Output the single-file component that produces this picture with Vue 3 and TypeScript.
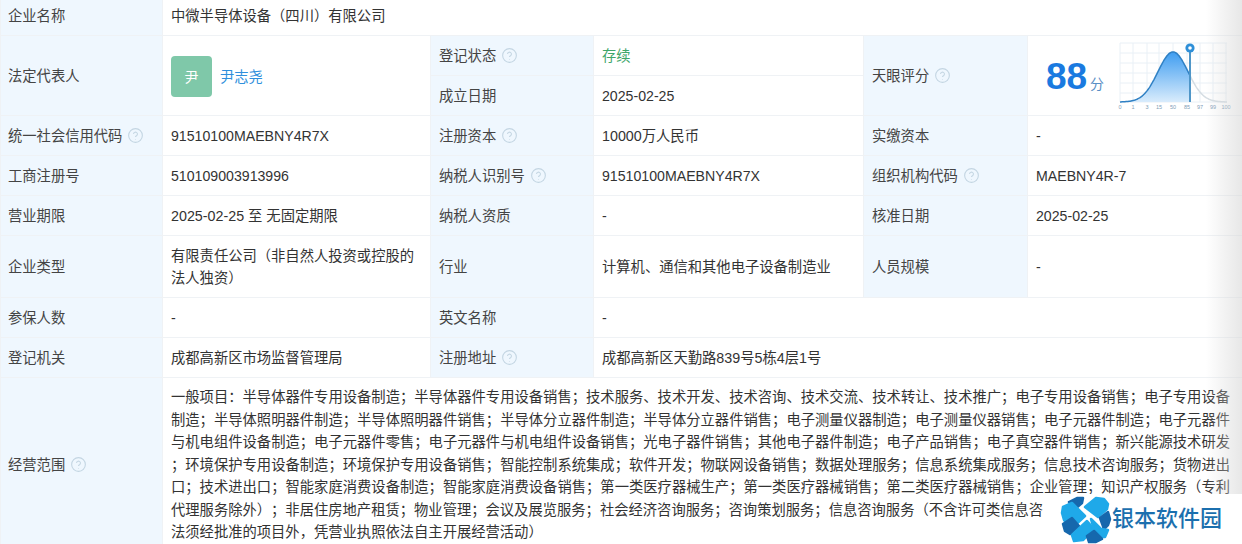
<script setup lang="ts">
const scopeLines: string[] = [
  '一般项目：半导体器件专用设备制造；半导体器件专用设备销售；技术服务、技术开发、技术咨询、技术交流、技术转让、技术推广；电子专用设备销售；电子专用设备',
  '制造；半导体照明器件制造；半导体照明器件销售；半导体分立器件制造；半导体分立器件销售；电子测量仪器制造；电子测量仪器销售；电子元器件制造；电子元器件',
  '与机电组件设备制造；电子元器件零售；电子元器件与机电组件设备销售；光电子器件销售；其他电子器件制造；电子产品销售；电子真空器件销售；新兴能源技术研发',
  '；环境保护专用设备制造；环境保护专用设备销售；智能控制系统集成；软件开发；物联网设备销售；数据处理服务；信息系统集成服务；信息技术咨询服务；货物进出',
  '口；技术进出口；智能家庭消费设备制造；智能家庭消费设备销售；第一类医疗器械生产；第一类医疗器械销售；第二类医疗器械销售；企业管理；知识产权服务（专利',
]
const ticks = [
  { x: 4, t: '0' }, { x: 17, t: '1' }, { x: 31, t: '3' }, { x: 43, t: '15' }, { x: 57, t: '50' },
  { x: 71, t: '85' }, { x: 84, t: '97' }, { x: 97, t: '99' }, { x: 110, t: '100' },
]
const hLines = [4, 14, 24, 34, 44, 54, 63]
const curveY = (x: number): number => 63 - 50 * Math.exp(-((x - 57) ** 2) / (2 * 15 * 15))
const pts = (a: number, b: number): string => {
  const out: string[] = []
  for (let x = a; x <= b; x += 1) out.push(`${x},${curveY(x).toFixed(1)}`)
  return out.join(' L')
}
const leftCurve = 'M' + pts(4, 74)
const rightCurve = 'M' + pts(74, 111)
const area = leftCurve + ' L74,63 L4,63 Z'
</script>

<template>
  <div class="page">
    <table class="info">
      <colgroup>
        <col class="c1" /><col class="c2" /><col class="c3" /><col class="c4" /><col class="c5" /><col class="c6" />
      </colgroup>
      <tbody>
        <tr class="r40">
          <th class="first">企业名称</th>
          <td colspan="5">中微半导体设备（四川）有限公司</td>
        </tr>
        <tr class="r40">
          <th class="first" rowspan="2">法定代表人</th>
          <td rowspan="2">
            <div class="person">
              <div class="avatar">尹</div>
              <span class="link">尹志尧</span>
            </div>
          </td>
          <th>登记状态<svg class="help" viewBox="0 0 14 14"><circle cx="7" cy="7" r="6.4" /><path d="M5.2 5.6a1.8 1.8 0 1 1 2.7 1.6c-.6.3-.9.7-.9 1.3M7 10.2v.5" /></svg></th>
          <td class="ok">存续</td>
          <th rowspan="2">天眼评分<svg class="help" viewBox="0 0 14 14"><circle cx="7" cy="7" r="6.4" /><path d="M5.2 5.6a1.8 1.8 0 1 1 2.7 1.6c-.6.3-.9.7-.9 1.3M7 10.2v.5" /></svg></th>
          <td rowspan="2" class="score-cell">
            <div class="score">
              <div class="num">88</div>
              <div class="unit">分</div>
              <svg class="chart" width="116" height="76" viewBox="0 0 116 76">
                <defs>
                  <linearGradient id="fillG" x1="0" y1="0" x2="0" y2="1">
                    <stop offset="0" stop-color="#3f9df0" />
                    <stop offset="1" stop-color="#d9ecfc" />
                  </linearGradient>
                </defs>
                <line v-for="y in hLines" :key="'h' + y" x1="4" x2="111" :y1="y" :y2="y" class="grid" />
                <line v-for="t in ticks" :key="'v' + t.x" :x1="t.x" :x2="t.x" y1="4" y2="63" class="grid" />
                <path :d="area" fill="url(#fillG)" />
                <path :d="rightCurve" class="curve-grey" />
                <path :d="leftCurve" class="curve" />
                <line x1="74" x2="74" y1="12" y2="63" class="marker" />
                <circle cx="74" cy="9" r="4.6" class="pin" />
                <circle cx="74" cy="9" r="1.8" fill="#ffffff" />
                <text v-for="t in ticks" :key="'t' + t.x" :x="t.x" y="70" class="tick">{{ t.t }}</text>
              </svg>
            </div>
          </td>
        </tr>
        <tr class="r40">
          <th>成立日期</th>
          <td class="latin">2025-02-25</td>
        </tr>
        <tr class="r40">
          <th class="first">统一社会信用代码<svg class="help" viewBox="0 0 14 14"><circle cx="7" cy="7" r="6.4" /><path d="M5.2 5.6a1.8 1.8 0 1 1 2.7 1.6c-.6.3-.9.7-.9 1.3M7 10.2v.5" /></svg></th>
          <td class="latin">91510100MAEBNY4R7X</td>
          <th>注册资本<svg class="help" viewBox="0 0 14 14"><circle cx="7" cy="7" r="6.4" /><path d="M5.2 5.6a1.8 1.8 0 1 1 2.7 1.6c-.6.3-.9.7-.9 1.3M7 10.2v.5" /></svg></th>
          <td>10000万人民币</td>
          <th>实缴资本</th>
          <td>-</td>
        </tr>
        <tr class="r40">
          <th class="first">工商注册号</th>
          <td class="latin">510109003913996</td>
          <th>纳税人识别号<svg class="help" viewBox="0 0 14 14"><circle cx="7" cy="7" r="6.4" /><path d="M5.2 5.6a1.8 1.8 0 1 1 2.7 1.6c-.6.3-.9.7-.9 1.3M7 10.2v.5" /></svg></th>
          <td class="latin">91510100MAEBNY4R7X</td>
          <th>组织机构代码<svg class="help" viewBox="0 0 14 14"><circle cx="7" cy="7" r="6.4" /><path d="M5.2 5.6a1.8 1.8 0 1 1 2.7 1.6c-.6.3-.9.7-.9 1.3M7 10.2v.5" /></svg></th>
          <td class="latin">MAEBNY4R-7</td>
        </tr>
        <tr class="r40">
          <th class="first">营业期限</th>
          <td>2025-02-25 至 无固定期限</td>
          <th>纳税人资质</th>
          <td>-</td>
          <th>核准日期</th>
          <td class="latin">2025-02-25</td>
        </tr>
        <tr class="r62">
          <th class="first">企业类型</th>
          <td>有限责任公司（非自然人投资或控股的法人独资）</td>
          <th>行业</th>
          <td>计算机、通信和其他电子设备制造业</td>
          <th>人员规模</th>
          <td>-</td>
        </tr>
        <tr class="r40">
          <th class="first">参保人数</th>
          <td>-</td>
          <th>英文名称</th>
          <td colspan="3">-</td>
        </tr>
        <tr class="r40">
          <th class="first">登记机关</th>
          <td>成都高新区市场监督管理局</td>
          <th>注册地址<svg class="help" viewBox="0 0 14 14"><circle cx="7" cy="7" r="6.4" /><path d="M5.2 5.6a1.8 1.8 0 1 1 2.7 1.6c-.6.3-.9.7-.9 1.3M7 10.2v.5" /></svg></th>
          <td colspan="3">成都高新区天勤路839号5栋4层1号</td>
        </tr>
        <tr class="r174">
          <th class="first">经营范围<svg class="help" viewBox="0 0 14 14"><circle cx="7" cy="7" r="6.4" /><path d="M5.2 5.6a1.8 1.8 0 1 1 2.7 1.6c-.6.3-.9.7-.9 1.3M7 10.2v.5" /></svg></th>
          <td colspan="5" class="scope">
            <div v-for="(l, i) in scopeLines" :key="i" class="just">{{ l }}</div>
            <div class="line">代理服务除外）；非居住房地产租赁；物业管理；会议及展览服务；社会经济咨询服务；咨询策划服务；信息咨询服务（不含许可类信息咨</div>
            <div class="line">法须经批准的项目外，凭营业执照依法自主开展经营活动）</div>
          </td>
        </tr>
      </tbody>
    </table>

    <div class="shade"></div>

    <div class="mark">
      <svg class="mark-logo" width="56" height="52" viewBox="0 0 56 52">
        <g stroke-linejoin="round" stroke-width="2.5">
          <path d="M11 9 L19 5 L25 5 L24 10 L17 16 Z" fill="#1668ad" stroke="#1668ad" />
          <path d="M27 14 L38 5 L46 6 L50 11 L49 16 L40 24 Z" fill="#1fa9e9" stroke="#1fa9e9" />
          <path d="M42 25 L50 19 L52 26 L50 32 L46 36 Z" fill="#1668ad" stroke="#1668ad" />
          <path d="M5 14 L14 10 L27 23 L14 35 L6 27 L4 20 Z" fill="#1fa9e9" stroke="#1fa9e9" />
          <path d="M5 31 L14 25 L21 33 L12 41 L7 38 Z" fill="#1668ad" stroke="#1668ad" />
          <path d="M14 42 L29 28 L36 36 L25 47 L16 48 Z" fill="#1fa9e9" stroke="#1fa9e9" />
          <path d="M33 26 L43 36 L50 37 L47 44 L42 44 L36 37 Z" fill="#1fa9e9" stroke="#1fa9e9" />
          <path d="M29 43 L36 38 L44 46 L38 49 L31 49 Z" fill="#1668ad" stroke="#1668ad" />
        </g>
      </svg>
      <span class="mark-text">银本软件园</span>
    </div>
  </div>
</template>

<style scoped>
.page {
  position: relative;
  width: 1242px;
  height: 544px;
  overflow: hidden;
  background: #fff;
  font-family: "Liberation Sans", "Noto Sans CJK SC", sans-serif;
  font-size: 14.3px;
  color: #333;
  text-spacing-trim: space-all;
}
.info {
  width: 1242px;
  margin-top: -5px;
  table-layout: fixed;
  border-collapse: collapse;
}
.c1 { width: 162px; }
.c2 { width: 268px; }
.c3 { width: 163px; }
.c4 { width: 270px; }
.c5 { width: 164px; }
.c6 { width: 215px; }
.r40 { height: 40px; }
.r62 { height: 62px; }
.r174 { height: 174px; }
th, td {
  box-sizing: border-box;
  padding: 0 8px;
  border: 1px solid #eff2f5;
  line-height: 22px;
  font-weight: 400;
  text-align: left;
  vertical-align: middle;
  word-break: break-all;
}
th {
  background: #eff7fe;
  white-space: nowrap;
  color: #444;
}
th.first { padding-left: 7px; }
.latin { font-size: 14.15px; }
.help {
  width: 15px;
  height: 15px;
  margin-left: 6px;
  vertical-align: -2px;
  fill: none;
  stroke: #c3d5e2;
  stroke-width: 1;
}
.person {
  display: flex;
  align-items: center;
  gap: 8px;
  padding-top: 2px;
}
.avatar {
  width: 41px;
  height: 41px;
  border-radius: 4px;
  background: #7fc8a9;
  color: #fff;
  font-size: 14px;
  display: flex;
  align-items: center;
  justify-content: center;
}
.link { color: #2f8fdc; }
.ok { color: #3fa66b; }
.score-cell { padding: 0; }
.score {
  display: flex;
  align-items: center;
  padding-left: 18px;
  padding-top: 2px;
}
.num {
  font-size: 37px;
  font-weight: 700;
  line-height: 40px;
  color: #1a7ae0;
  width: 43px;
}
.unit {
  margin: 14px 0 0 1px;
  color: #5a8fc5;
  font-size: 14px;
  line-height: 20px;
}
.chart {
  margin-left: 12px;
  flex: none;
}
.grid { stroke: #e9f0f6; stroke-width: 1; }
.curve { fill: none; stroke: #2f80c4; stroke-width: 1.5; }
.curve-grey { fill: none; stroke: #d5dde3; stroke-width: 1.5; }
.marker { stroke: #4f96c8; stroke-width: 2; }
.pin { fill: #2e8fd8; }
.tick { font-size: 5.5px; fill: #7fa0b8; text-anchor: middle; }
.scope {
  vertical-align: top;
  padding: 8px 12px 0 8px;
  line-height: 22.5px;
}
.just {
  white-space: nowrap;
  text-align: justify;
  text-align-last: justify;
}
.line { white-space: nowrap; }
.shade {
  position: absolute;
  top: 0;
  right: 0;
  bottom: 0;
  width: 36px;
  pointer-events: none;
  background: linear-gradient(to right, rgba(225, 225, 225, 0), rgba(215, 215, 215, 0.6));
}
.mark {
  position: absolute;
  left: 1044px;
  top: 494px;
  right: 0;
  bottom: 0;
  background: #fff;
  display: flex;
  align-items: center;
}
.mark-logo {
  margin-left: 14px;
  flex: none;
}
.mark-text {
  margin-left: -2px;
  font-size: 22px;
  font-weight: 500;
  color: #1b6fae;
  line-height: 26px;
}
</style>
